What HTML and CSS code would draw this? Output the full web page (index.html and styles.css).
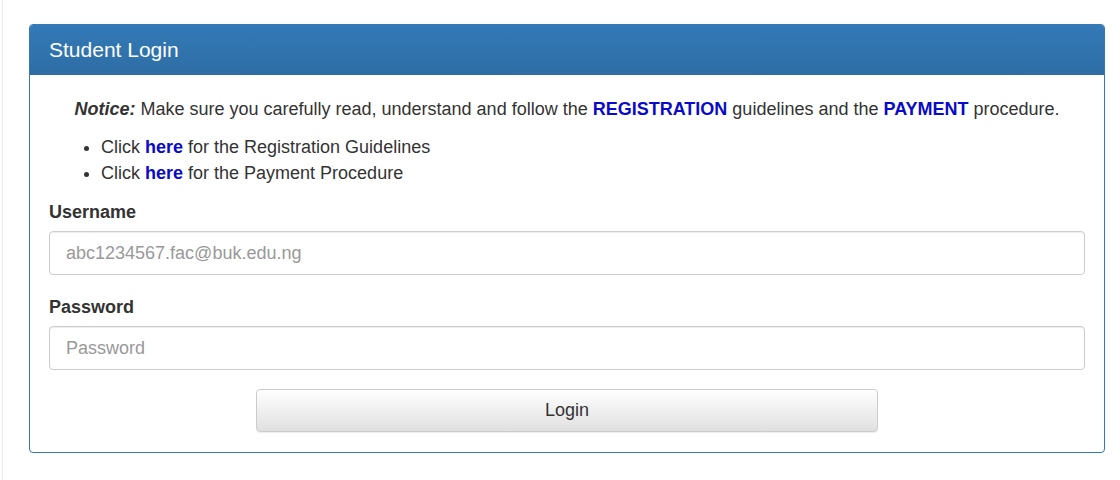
FILE: index.html
```html
<!DOCTYPE html>
<html lang="en">
<head>
<meta charset="utf-8">
<title>Student Login</title>
<link rel="stylesheet" href="styles.css">
</head>
<body>
<div class="page">
  <div class="panel">
    <div class="panel-heading">Student Login</div>
    <div class="panel-body">
      <p class="notice"><b><i>Notice:</i></b> Make sure you carefully read, understand and follow the <a href="#">REGISTRATION</a> guidelines and the <a href="#">PAYMENT</a> procedure.</p>
      <ul class="links">
        <li>Click <a href="#">here</a> for the Registration Guidelines</li>
        <li>Click <a href="#">here</a> for the Payment Procedure</li>
      </ul>
      <form class="form">
        <div class="group">
          <label class="label" for="u">Username</label>
          <input class="input" id="u" type="text" placeholder="abc1234567.fac@buk.edu.ng">
        </div>
        <div class="group">
          <label class="label" for="p">Password</label>
          <input class="input" id="p" type="password" placeholder="Password">
        </div>
        <div class="actions">
          <button class="btn" type="button">Login</button>
        </div>
      </form>
    </div>
  </div>
</div>
</body>
</html>
```
FILE: styles.css
```css
* { box-sizing: border-box; }
html, body { margin: 0; padding: 0; background: #fff; }
body {
  font-family: "Liberation Sans", Arial, sans-serif;
  font-size: 18px;
  line-height: 26px;
  color: #333;
}
.page {
  margin-left: 2px;
  border-left: 1px solid #ececec;
  padding: 24px 15px 26px 26px;
  min-height: 480px;
}
.panel {
  border: 1px solid #337ab7;
  border-radius: 4px;
  background: #fff;
  overflow: hidden;
}
.panel-heading {
  background: linear-gradient(to bottom, #337ab7 0%, #2e6da4 100%);
  color: #fff;
  font-size: 21px;
  line-height: 26px;
  padding: 12px 19px 12px;
}
.panel-body {
  padding: 21px 19px 20px;
}
.notice {
  margin: 0 0 12px;
  text-align: center;
}
a {
  color: #0a0ac8;
  font-weight: bold;
  text-decoration: none;
}
.links {
  margin: 0 0 13px;
  padding-left: 52px;
}
.group { margin-bottom: 19px; }
.label {
  display: block;
  font-weight: bold;
  margin-bottom: 6px;
}
.input {
  display: block;
  width: 100%;
  height: 44px;
  padding: 8px 16px;
  font-family: inherit;
  font-size: 18px;
  line-height: 26px;
  color: #555;
  border: 1px solid #ccc;
  border-radius: 4px;
  box-shadow: inset 0 1px 1px rgba(0,0,0,.075);
  background: #fff;
}
.input::placeholder { color: #999; }
.actions {
  display: flex;
  justify-content: center;
}
.btn {
  width: 60%;
  height: 43px;
  font-family: inherit;
  font-size: 18px;
  color: #333;
  background: linear-gradient(to bottom, #fff 0%, #e0e0e0 100%);
  border: 1px solid #ccc;
  border-radius: 4px;
  box-shadow: inset 0 1px 0 rgba(255,255,255,.15), 0 1px 1px rgba(0,0,0,.075);
}
```
